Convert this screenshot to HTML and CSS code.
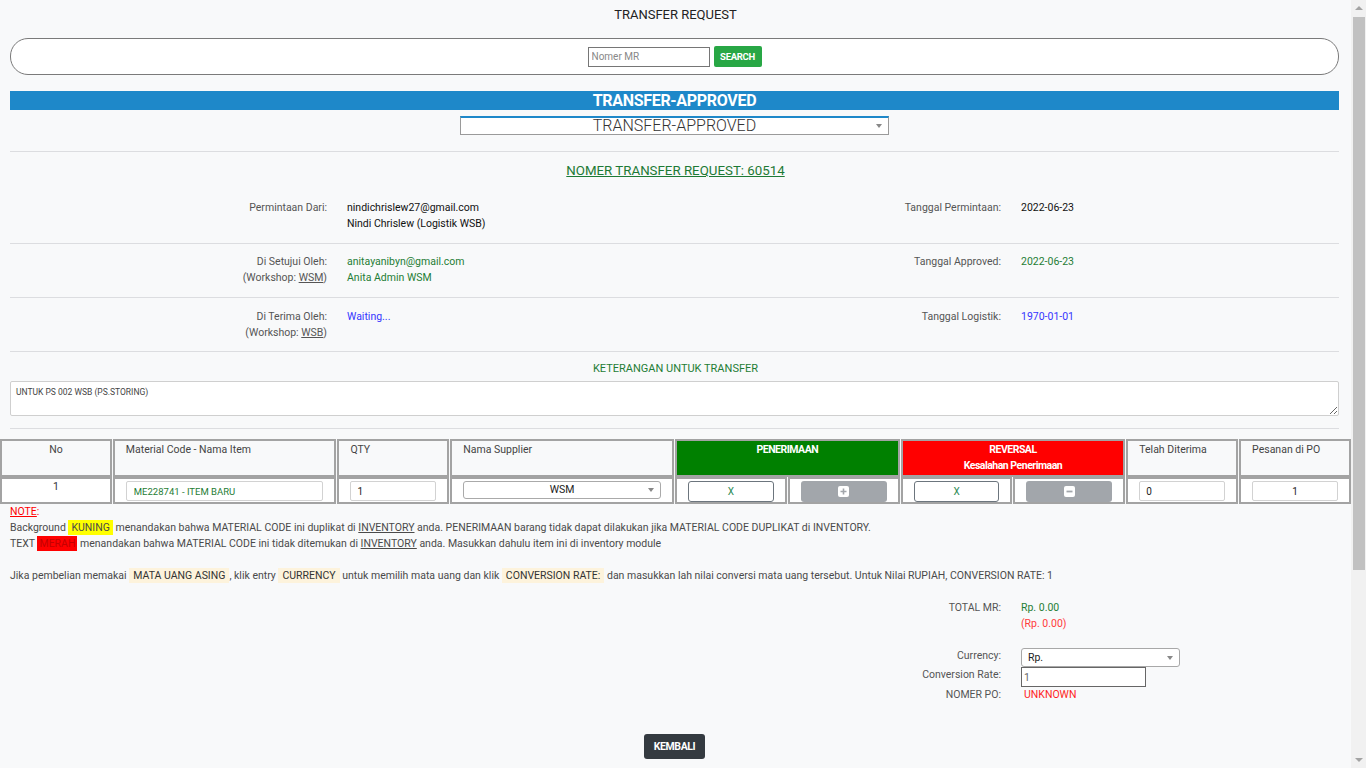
FILE: index.html
```html
<!DOCTYPE html>
<html lang="id">
<head>
<meta charset="utf-8">
<title>Transfer Request</title>
<link rel="stylesheet" href="styles.css">
</head>
<body>
<div class="page">
<header class="page-title">TRANSFER REQUEST</header>

<form class="search-bar">
  <input class="search-input" type="text" placeholder="Nomer MR">
  <button class="btn-search" type="button">SEARCH</button>
</form>

<div class="status-bar">TRANSFER-APPROVED</div>
<div class="status-select-wrap">
  <div class="select status-select">TRANSFER-APPROVED<span class="caret"></span></div>
</div>

<hr class="rule">
<div class="nomer"><span>NOMER TRANSFER REQUEST: 60514</span></div>

<section class="info-row">
  <div class="lbl">Permintaan Dari:</div>
  <div class="val">nindichrislew27@gmail.com<br>Nindi Chrislew (Logistik WSB)</div>
  <div class="lbl">Tanggal Permintaan:</div>
  <div class="val">2022-06-23</div>
</section>
<hr class="rule">
<section class="info-row">
  <div class="lbl">Di Setujui Oleh:<br>(Workshop: <u>WSM</u>)</div>
  <div class="val green">anitayanibyn@gmail.com<br>Anita Admin WSM</div>
  <div class="lbl">Tanggal Approved:</div>
  <div class="val green">2022-06-23</div>
</section>
<hr class="rule">
<section class="info-row info-row-last">
  <div class="lbl">Di Terima Oleh:<br>(Workshop: <u>WSB</u>)</div>
  <div class="val blue">Waiting...</div>
  <div class="lbl">Tanggal Logistik:</div>
  <div class="val blue">1970-01-01</div>
</section>
<hr class="rule">

<div class="ket-title">KETERANGAN UNTUK TRANSFER</div>
<div class="ket-wrap"><textarea class="ket-text">UNTUK PS 002 WSB (PS.STORING)</textarea></div>
<hr class="rule rule-b">

<table class="items">
  <colgroup>
    <col class="c1"><col class="c2"><col class="c1"><col class="c2">
    <col class="c1"><col class="c1"><col class="c1"><col class="c1">
    <col class="c1"><col class="c1">
  </colgroup>
  <thead>
    <tr>
      <th class="center">No</th>
      <th>Material Code - Nama Item</th>
      <th>QTY</th>
      <th>Nama Supplier</th>
      <th colspan="2" class="th-green">PENERIMAAN</th>
      <th colspan="2" class="th-red">REVERSAL<br>Kesalahan Penerimaan</th>
      <th>Telah Diterima</th>
      <th>Pesanan di PO</th>
    </tr>
  </thead>
  <tbody>
    <tr>
      <td class="center no">1</td>
      <td><input class="fld fld-green" type="text" value="ME228741 - ITEM BARU"></td>
      <td><input class="fld" type="text" value="1"></td>
      <td><div class="select sup-select">WSM<span class="caret"></span></div></td>
      <td><button class="btn-x" type="button">X</button></td>
      <td><button class="btn-gray" type="button"><svg width="11" height="11" viewBox="0 0 11 11"><rect x="0" y="0" width="11" height="11" rx="2" fill="#fff"/><path d="M5.5 2.5v6M2.5 5.5h6" stroke="#a2a6ab" stroke-width="1.6"/></svg></button></td>
      <td><button class="btn-x" type="button">X</button></td>
      <td><button class="btn-gray" type="button"><svg width="11" height="11" viewBox="0 0 11 11"><rect x="0" y="0" width="11" height="11" rx="2" fill="#fff"/><path d="M2.5 5.5h6" stroke="#a2a6ab" stroke-width="1.8"/></svg></button></td>
      <td><input class="fld" type="text" value="0"></td>
      <td><input class="fld center" type="text" value="1"></td>
    </tr>
  </tbody>
</table>

<div class="notes">
  <div class="red"><u>NOTE</u>:</div>
  <div>Background <span class="hl-yellow">KUNING</span> menandakan bahwa MATERIAL CODE ini duplikat di <u>INVENTORY</u> anda. PENERIMAAN barang tidak dapat dilakukan jika MATERIAL CODE DUPLIKAT di INVENTORY.</div>
  <div>TEXT <span class="hl-red">MERAH</span> menandakan bahwa MATERIAL CODE ini tidak ditemukan di <u>INVENTORY</u> anda. Masukkan dahulu item ini di inventory module</div>
  <div class="blank"></div>
  <div>Jika pembelian memakai <span class="hl-cream">MATA UANG ASING</span>, klik entry <span class="hl-cream">CURRENCY</span> untuk memilih mata uang dan klik <span class="hl-cream">CONVERSION RATE:</span> dan masukkan lah nilai conversi mata uang tersebut. Untuk Nilai RUPIAH, CONVERSION RATE: 1</div>
</div>

<section class="totals">
  <div class="lbl">TOTAL MR:</div>
  <div class="val"><span class="green">Rp. 0.00</span><br><span class="red-soft">(Rp. 0.00)</span></div>
</section>
<section class="totals totals-form">
  <div class="lbl lbl-cur">Currency:</div>
  <div class="val"><div class="select cur-select">Rp.<span class="caret"></span></div></div>
  <div class="lbl lbl-rate">Conversion Rate:</div>
  <div class="val"><input class="rate-input" type="text" value="1"></div>
  <div class="lbl lbl-po">NOMER PO:</div>
  <div class="val po">UNKNOWN</div>
</section>

<div class="actions"><button class="btn-back" type="button">KEMBALI</button></div>
</div>

<div class="fake-scrollbar" aria-hidden="true">
  <span class="sb-arrow sb-up"></span>
  <span class="sb-thumb"></span>
  <span class="sb-arrow sb-down"></span>
</div>
</body>
</html>
```

FILE: styles.css
```css
html, body {
  margin: 0;
  padding: 0;
}
body {
  background: #f8f9fa;
  font-family: Roboto, "Liberation Sans", sans-serif;
  font-size: 10.5px;
  line-height: 16px;
  color: #212529;
}
.page {
  margin-right: 15px;
  padding-bottom: 260px;
}

/* imitation of the browser's scrollbar shown in the reference */
.fake-scrollbar {
  position: fixed;
  top: 0;
  right: 0;
  width: 15px;
  height: 100vh;
  background: #f1f1f1;
  display: flex;
  flex-direction: column;
  align-items: center;
}
.sb-arrow {
  display: block;
  width: 0;
  height: 0;
  border-left: 4px solid transparent;
  border-right: 4px solid transparent;
}
.sb-up {
  margin-top: 6px;
  border-bottom: 4px solid #a3a3a3;
}
.sb-thumb {
  display: block;
  width: 12px;
  height: 553px;
  margin-top: 7px;
  background: #c1c1c1;
}
.sb-down {
  margin-top: auto;
  margin-bottom: 6px;
  border-top: 4px solid #a3a3a3;
}

.page-title {
  text-align: center;
  font-size: 13px;
  line-height: 16px;
  padding-top: 7px;
  color: #222;
}

.search-bar {
  margin: 15px 12px 0 10px;
  height: 35px;
  border: 1px solid #7a7a7a;
  border-radius: 18px;
  background: #fff;
  display: flex;
  align-items: center;
  justify-content: center;
  gap: 4px;
}
.search-input {
  box-sizing: border-box;
  width: 122px;
  height: 20px;
  border: 1px solid #767676;
  padding: 0 3px;
  font-family: Roboto, sans-serif;
  font-size: 10px;
  margin: 0;
}
.search-input::placeholder { color: #888; }
.btn-search {
  height: 21px;
  width: 48px;
  border: 0;
  border-radius: 2px;
  background: #28a745;
  color: #fff;
  font-family: Roboto, sans-serif;
  font-size: 9.5px;
  font-weight: 700;
  letter-spacing: -0.3px;
  padding: 0;
  margin: 0;
}

.status-bar {
  margin: 16px 12px 0 10px;
  height: 19px;
  line-height: 19px;
  background: #1e88c9;
  color: #fff;
  font-weight: 700;
  font-size: 16px;
  letter-spacing: -0.3px;
  text-align: center;
}
.status-select-wrap {
  display: flex;
  justify-content: center;
  margin-top: 6px;
  padding-right: 2px;
}
.select {
  position: relative;
  box-sizing: border-box;
  background: #fff;
}
.caret {
  position: absolute;
  right: 6px;
  top: 50%;
  margin-top: -2px;
  border-left: 3.5px solid transparent;
  border-right: 3.5px solid transparent;
  border-top: 4px solid #888;
}
.status-select {
  width: 429px;
  height: 19px;
  border: 1px solid #9a9a9a;
  border-top: 2px solid #1e88c9;
  text-align: center;
  font-size: 16px;
  font-weight: 300;
  line-height: 16px;
  color: #333;
}

.rule {
  border: 0;
  border-top: 1px solid #dcdde0;
  margin: 16px 12px 0 10px;
  height: 0;
}
.info-row + .rule, .rule + .rule { margin-top: 0; }

.nomer {
  text-align: center;
  padding: 11px 0 11px;
  font-size: 13.3px;
  line-height: 16px;
  color: #1d7a35;
}
.nomer span { text-decoration: underline; }

.info-row, .totals {
  display: grid;
  grid-template-columns: 317px 317px 317px 1fr;
  column-gap: 20px;
  padding-left: 10px;
}
.info-row {
  padding-top: 10px;
  padding-bottom: 11px;
}
.info-row-last { padding-top: 11px; padding-bottom: 10px; }
.lbl {
  text-align: right;
  color: #555;
}
.val { color: #111; }
.green { color: #1f7d35; }
.blue { color: #3535ff; }
.red { color: #ff0000; }
.red-soft { color: #ff3b3b; }
.center { text-align: center; }

.ket-title {
  text-align: center;
  color: #1f7d35;
  font-size: 11px;
  padding-top: 9px;
}
.ket-wrap {
  margin: 4px 12px 0 10px;
}
.ket-text {
  display: block;
  box-sizing: border-box;
  width: 100%;
  height: 35px;
  border: 1px solid #cfcfcf;
  border-radius: 2px;
  background: #fff;
  font-family: Roboto, sans-serif;
  font-size: 8.5px;
  line-height: 12px;
  color: #444;
  padding: 4px 5px;
  margin: 0;
}
.rule-b { margin-top: 12px; }

.items {
  margin: 10px -1px 0;
  width: calc(100% + 2px);
  table-layout: fixed;
  border-collapse: separate;
  border-spacing: 1px 0;
  border: 0;
}
.items col.c1 { width: 8.333%; }
.items col.c2 { width: 16.667%; }
.items th, .items td {
  border: 2px solid #a3a3a3;
  font-weight: 400;
  vertical-align: top;
  color: #444;
  font-size: 10.5px;
  line-height: 16px;
}
.items th {
  text-align: left;
  padding: 1px 11px;
  height: 32px;
}
.items th.center { text-align: center; }
.items th.th-green {
  background: #008000;
  color: #fff;
  text-align: center;
  font-weight: 700;
  letter-spacing: -0.5px;
}
.items th.th-red {
  background: #ff0000;
  color: #fff;
  text-align: center;
  font-weight: 700;
  letter-spacing: -0.5px;
}
.items td {
  background: #fff;
  padding: 0 11px;
  height: 22px;
}
.items td.no { color: #333; }

.fld {
  box-sizing: border-box;
  width: 100%;
  height: 20px;
  border: 1px solid #d2d2d2;
  border-radius: 2px;
  background: #fff;
  font-family: Roboto, sans-serif;
  font-size: 10px;
  padding: 0 6px;
  margin: 2px 0 0;
  color: #222;
  display: block;
}
.fld.center { text-align: center; }
.fld-green { color: #1f7d35; padding-left: 7px; font-size: 9.5px; }

.sup-select {
  margin-top: 2px;
  height: 18px;
  border: 1px solid #aaa;
  border-radius: 3px;
  text-align: center;
  font-size: 10.5px;
  line-height: 16px;
  color: #222;
}

.btn-x {
  display: block;
  box-sizing: border-box;
  width: 100%;
  height: 21px;
  margin-top: 2px;
  border: 1px solid #6c757d;
  border-radius: 3px;
  background: #fff;
  color: #2f8d58;
  font-family: Roboto, sans-serif;
  font-size: 10px;
  padding: 0;
}
.btn-gray {
  display: flex;
  align-items: center;
  justify-content: center;
  box-sizing: border-box;
  width: 100%;
  height: 21px;
  margin-top: 2px;
  border: 0;
  border-radius: 3px;
  background: #a2a6ab;
  padding: 0;
}

.notes {
  padding-left: 10px;
  color: #4a4a4a;
  font-size: 10.5px;
  line-height: 16px;
}
.notes .blank { height: 16px; }
.notes u { text-underline-offset: 1px; }
.hl-yellow {
  background: #ffff00;
  padding: 1px 3px;
}
.hl-red {
  background: #ff0000;
  color: #c40000;
  padding: 1px 2px;
}
.hl-cream {
  background: #fdf3dc;
  color: #333;
  padding: 1px 4px;
}

.totals {
  margin-top: 16px;
}
.totals .lbl { grid-column: 3; }
.totals .val { grid-column: 4; }
.totals-form {
  margin-top: 16px;
  row-gap: 0;
}
.cur-select {
  width: 159px;
  height: 19px;
  border: 1px solid #a8a8a8;
  border-radius: 3px;
  padding-left: 6px;
  font-size: 10.5px;
  line-height: 17px;
  color: #222;
}
.lbl-cur { line-height: 16px; }
.rate-input {
  display: block;
  box-sizing: border-box;
  width: 125px;
  height: 20px;
  border: 1px solid #666;
  font-family: Roboto, sans-serif;
  font-size: 10.5px;
  color: #666;
  padding: 0 2px;
  margin: 0;
}
.lbl-rate { line-height: 16px; }
.po { color: #ff1f1f; padding-left: 3px; }

.actions {
  text-align: center;
  margin-top: 31px;
  padding-right: 2px;
}
.btn-back {
  height: 25px;
  width: 61px;
  border: 0;
  border-radius: 3px;
  background: #343a40;
  color: #fff;
  font-family: Roboto, sans-serif;
  font-weight: 700;
  font-size: 10.5px;
  letter-spacing: -0.4px;
  padding: 0;
}
```
